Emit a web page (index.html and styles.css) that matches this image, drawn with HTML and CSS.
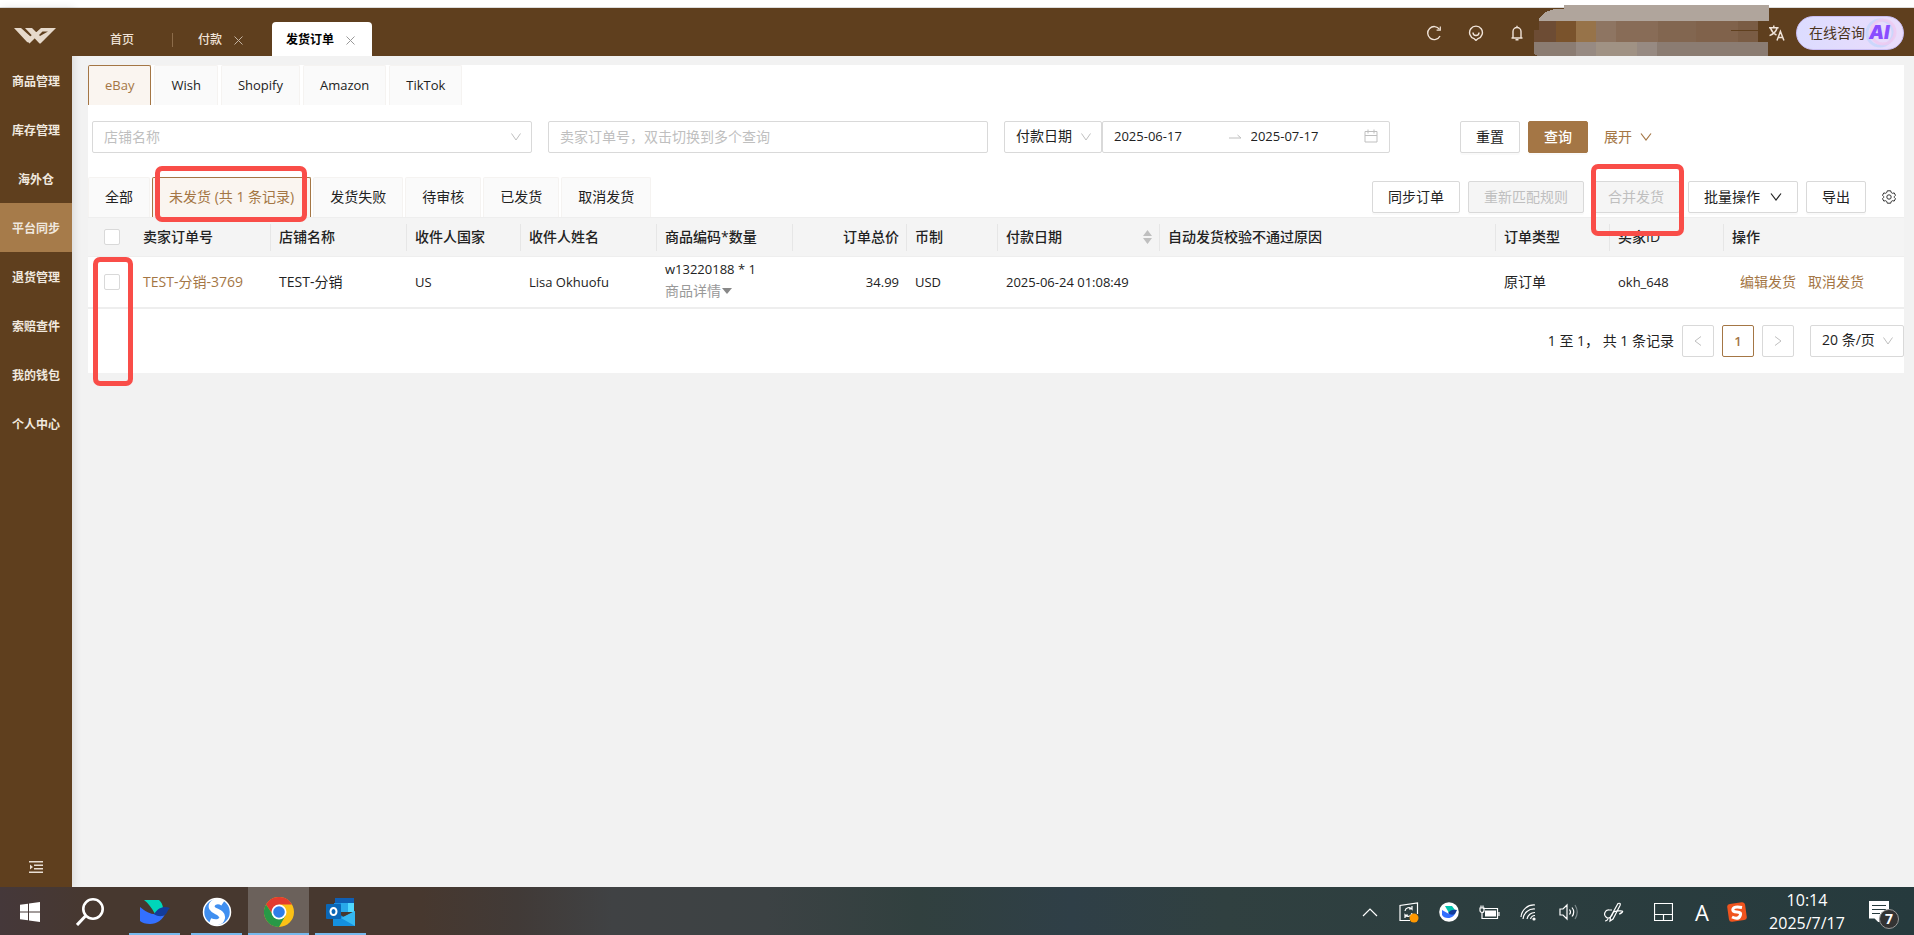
FILE: index.html
```html
<!DOCTYPE html>
<html lang="zh-CN">
<head>
<meta charset="utf-8">
<title>发货订单</title>
<link rel="stylesheet" href="styles.css">
</head>
<body>
<div class="edge"></div>
<div class="app">
  <aside class="sidebar">
    <a class="logo" href="#" aria-label="首页">
      <svg width="42" height="16" viewBox="0 0 42 16"><path d="M0 0h7l10 9-3.500 5.500zM11 0h7l8 8 8-4.500h-5.500L25 7l-3-2.500L27 0h15L26.500 15.500h-1zM15.500 15.500L12 12l6.500-5.500 3 3z" fill="#e6d9cb"/></svg>
    </a>
    <nav class="menu">
      <a href="#">商品管理</a>
      <a href="#">库存管理</a>
      <a href="#">海外仓</a>
      <a href="#" class="current">平台同步</a>
      <a href="#">退货管理</a>
      <a href="#">索赔查件</a>
      <a href="#">我的钱包</a>
      <a href="#">个人中心</a>
    </nav>
    <button class="fold" aria-label="展开菜单">
      <svg width="14" height="12" viewBox="0 0 14 12" fill="#e9dfd5"><path d="M0 0h14v1.500H0zM5 3.500h9V5H5zM5 7h9v1.500H5zM0 10.500h14V12H0zM1 3.500l3 2.500-3 2.500z"/></svg>
    </button>
  </aside>
  <div class="main">
    <header class="topbar">
      <nav class="pages">
        <a class="page home" href="#">首页</a>
        <a class="page pay" href="#">付款<svg width="9" height="9" viewBox="0 0 9 9"><path d="M.5.5l8 8M8.500.5l-8 8"/></svg></a>
        <a class="page open" href="#">发货订单<svg width="9" height="9" viewBox="0 0 9 9"><path d="M.5.5l8 8M8.500.5l-8 8"/></svg></a>
      </nav>
      <div class="tools">
        <button aria-label="刷新"><svg width="16" height="16" viewBox="0 0 16 16"><path d="M13.500 4.300A6.500 6.500 0 1 0 14 11"/><path d="M14.300 1.500v3.700h-3.700" stroke-width="1.200"/></svg></button>
        <button aria-label="客服"><svg width="16" height="16" viewBox="0 0 16 16"><path d="M8 15.400l-2-1.800A6.400 6.400 0 1 1 10 13.600z"/><path d="M5 7.500a3 3 0 0 0 6 0"/></svg></button>
        <button aria-label="通知"><svg width="14" height="16" viewBox="0 0 14 16"><path d="M1.500 13h11M3 13V6.500a4 4 0 0 1 8 0V13M7 .8v1.700M5.500 14.800h3"/></svg></button>
        <svg class="account" width="235" height="51" viewBox="0 0 235 51" shape-rendering="crispEdges">
          <path fill="#b0a59c" d="M30 0h205v16H5v-3l6-6 10-3h9z"/>
          <path fill="#6d4c34" d="M5 16h17v21H0V25h5z"/><path fill="#7a532c" d="M22 16h20v21H22z"/><path fill="#977349" d="M42 16h20v21H42z"/><path fill="#8e7562" d="M62 16h20v21H62z"/><path fill="#886c57" d="M82 16h42v21H82z"/><path fill="#826650" d="M124 16h38v21h-38z"/><path fill="#80624b" d="M162 16h42v21h-42z"/><path fill="#7a5c44" d="M204 16h20v21h-20z"/>
          <path fill="#8b7c72" d="M0 37h234v14H4l-4-2z"/><path fill="#a09284" d="M62 37h41v14H62z"/><path fill="#978a82" d="M42 37h20v14H42zM103 37h20v14h-20z"/><path fill="#5f3f1e" d="M197 25h27v1h-27z"/>
        </svg>
        <button class="lang" aria-label="语言"><svg width="16" height="16" viewBox="0 0 15 15"><path d="M0 2.500h9M4.500.500v2M1.500 3c1 3 3 5 5.500 6.500M7.500 3C6.500 6.500 4 8.500.5 10M7.500 14.500l3.200-8.500L14 14.500M8.700 11.700H13"/></svg></button>
        <button class="consult">在线咨询<span class="ai"><svg width="32" height="32" viewBox="0 0 32 32" fill="none"><circle cx="15" cy="16" r="13" stroke="#c4d6fb"/><circle cx="18" cy="15" r="12" stroke="#efc9f0"/></svg><b>AI</b></span></button>
      </div>
    </header>
    <main class="panel">
      <nav class="tabs shops">
        <button class="tab latin on">eBay</button><button class="tab latin">Wish</button><button class="tab latin">Shopify</button><button class="tab latin">Amazon</button><button class="tab latin">TikTok</button>
      </nav>
      <form class="filters">
        <div class="drop">
          <input type="text" class="field" placeholder="店铺名称" aria-label="店铺名称">
          <svg class="chev" width="12" height="12" viewBox="0 0 12 12"><path d="M1.500 2.500L6 9l4.500-6.500"/></svg>
        </div>
        <input type="text" class="field" placeholder="卖家订单号，双击切换到多个查询" aria-label="卖家订单号">
        <div class="period">
          <div class="drop kind">
            <select class="field" aria-label="日期类型"><option>付款日期</option></select>
            <svg class="chev" width="12" height="12" viewBox="0 0 12 12"><path d="M1.500 2.500L6 9l4.500-6.500"/></svg>
          </div>
          <div class="range field">
            <input class="latin" type="text" value="2025-06-17" aria-label="开始日期">
            <svg width="14" height="14" viewBox="0 0 14 14"><path d="M1 9h12L9.500 6"/></svg>
            <input class="latin" type="text" value="2025-07-17" aria-label="结束日期">
            <svg width="14" height="14" viewBox="0 0 14 14"><path d="M1 2.500h12v10.500H1zM1 6.500h12M4 .500v4M10 .500v4"/></svg>
          </div>
        </div>
        <div class="acts">
          <button type="button" class="btn">重置</button>
          <button type="button" class="btn solid">查询</button>
          <a class="more" href="#">展开<svg width="12" height="12" viewBox="0 0 12 12"><path d="M1 2.500L6 9l5-6.500"/></svg></a>
        </div>
      </form>
      <div class="bar">
        <nav class="tabs">
          <button class="tab">全部</button><button class="tab on marked">未发货 (<span>共 1 条记录</span>)<i class="mark mark-tab"></i></button><button class="tab">发货失败</button><button class="tab">待审核</button><button class="tab">已发货</button><button class="tab">取消发货</button>
        </nav>
        <div class="ops">
          <button class="btn">同步订单</button>
          <button class="btn" disabled>重新匹配规则</button>
          <span class="marked"><button class="btn" disabled>合并发货</button><i class="mark mark-merge"></i></span>
          <button class="btn">批量操作<svg width="12" height="12" viewBox="0 0 12 12"><path d="M1 2.500L6 9l5-6.500"/></svg></button>
          <button class="btn">导出</button>
          <button class="gear" aria-label="设置"><svg width="14" height="14" viewBox="0 0 14 14"><path d="M5.300.8h3.400l.5 1.700 1.300.8 1.700-.4 1.300 2.400-1.200 1.300v.8l1.200 1.300-1.300 2.400-1.700-.4-1.300.8-.5 1.700H5.300l-.5-1.700-1.300-.8-1.700.4L.5 8.700l1.200-1.300v-.8L.5 5.300l1.300-2.400 1.700.4 1.300-.8z"/><circle cx="7" cy="7" r="2.200"/></svg></button>
        </div>
      </div>
      <div class="grid">
        <table>
          <colgroup><col class="w47"><col class="w136"><col class="w136"><col class="w114"><col class="w136"><col class="w136"><col class="w114"><col class="w91"><col class="w162"><col><col class="w114"><col class="w114"><col class="w180"></colgroup>
          <thead><tr>
            <th class="pick"><input type="checkbox" aria-label="全选"></th><th>卖家订单号</th><th>店铺名称</th><th>收件人国家</th><th>收件人姓名</th><th>商品编码*数量</th><th class="num">订单总价</th><th>币制</th><th><span class="sort">付款日期<svg width="9" height="14" viewBox="0 0 9 14"><path d="M4.500 0L9 6H0zM4.500 14L9 8H0z"/></svg></span></th><th>自动发货校验不通过原因</th><th>订单类型</th><th>买家ID</th><th>操作</th>
          </tr></thead>
          <tbody><tr>
            <td class="pick"><input type="checkbox" aria-label="选择订单"></td><td><a href="#">TEST-分销-3769</a></td><td>TEST-分销</td><td class="latin">US</td><td class="latin">Lisa Okhuofu</td><td class="goods"><div class="latin">w13220188 * 1</div><a class="detail" href="#">商品详情<svg width="10" height="6" viewBox="0 0 10 6"><path d="M0 0h10L5 6z"/></svg></a></td><td class="num latin">34.99</td><td class="latin">USD</td><td class="latin">2025-06-24 01:08:49</td><td></td><td>原订单</td><td class="latin">okh_648</td><td class="links"><a href="#">编辑发货</a><a href="#">取消发货</a></td>
          </tr></tbody>
        </table>
        <i class="mark mark-rows"></i>
      </div>
      <footer class="pager">
        <span>1 至 1， 共 1 条记录</span>
        <button aria-label="上一页"><svg width="12" height="12" viewBox="0 0 12 12"><path d="M9 1.500L3 6l6 4.500"/></svg></button>
        <button class="now latin">1</button>
        <button aria-label="下一页"><svg width="12" height="12" viewBox="0 0 12 12"><path d="M3 1.500L9 6l-6 4.500"/></svg></button>
        <div class="drop size">
          <select class="field" aria-label="每页条数"><option>20 条/页</option></select>
          <svg class="chev" width="12" height="12" viewBox="0 0 12 12"><path d="M1.500 2.500L6 9l4.500-6.500"/></svg>
        </div>
      </footer>
    </main>
  </div>
</div>
<div class="taskbar">
  <div class="launch">
    <button class="start" aria-label="开始"><svg width="20" height="20" viewBox="0 0 20 20" fill="#fff"><path d="M0 2.800l8-1.100v7.800H0zM9 1.500L20 0v9.500H9zM0 10.500h8v7.800l-8-1.100zM9 10.500h11V20L9 18.500z"/></svg></button>
    <button class="find" aria-label="搜索"><svg width="28" height="28" viewBox="0 0 28 28" fill="none" stroke="#fff" stroke-width="2.600"><circle cx="17" cy="11" r="9.700"/><path d="M9.500 18L1 27" stroke-width="3"/></svg></button>
    <button class="task" aria-label="飞连"><svg width="30" height="26" viewBox="0 0 30 26"><path fill="#00d6b9" d="M4 1h15c2.500 2.500 3.500 4.500 4 7.500L15 15C12 9 8 4 4 1z"/><path fill="#3370ff" d="M0 8c6 5 12 8 17 7 2 0 6-1 9-2-3 8-9 12-16 12-4 0-8-1-10-3z"/><path fill="#133c9a" d="M14 15c5-7 10-8 16-6-2 1-3 5-4 6-3 3-8 3-12 0z"/></svg></button>
    <button class="task" aria-label="搜狗"><svg width="30" height="30" viewBox="0 0 30 30"><circle cx="15" cy="15" r="13.500" fill="#408ff0" stroke="#fff" stroke-width="1.500"/><path d="M21 6C15 2 8 6 10 11c2 4 11 4 10 10-1 5-7 5-12 3" fill="none" stroke="#fff" stroke-width="6"/></svg></button>
    <button class="task live" aria-label="Chrome"><svg width="30" height="30" viewBox="0 0 30 30"><circle cx="15" cy="15" r="15" fill="#fbc116"/><path fill="#e33b2e" d="M2 7.500A15 15 0 0 1 28 7.500H15L9 18z"/><path fill="#279847" d="M2 7.500A15 15 0 0 0 15 30l6.500-11.500L15 15 9 18z"/><circle cx="15" cy="15" r="7.500" fill="#fff"/><circle cx="15" cy="15" r="5.800" fill="#2f7de9"/></svg></button>
    <button class="task" aria-label="Outlook"><svg width="30" height="28" viewBox="0 0 30 28"><path fill="#0f5fb4" d="M9 0h19v8H9z"/><path fill="#1a8ee0" d="M8 5h7v9H8z"/><path fill="#28a8ea" d="M15 5h7v9h-7z"/><path fill="#50d9ff" d="M22 5h6v9h-6z"/><path fill="#1490df" d="M7 13l11 6 11-6v15H7z"/><path fill="#35b8f1" d="M29 13v15L15 20z"/><rect y="6" width="15" height="15" rx="1" fill="#0a67b7"/><ellipse cx="7.500" cy="13.500" rx="3" ry="3.500" fill="none" stroke="#fff" stroke-width="2"/></svg></button>
  </div>
  <div class="tray">
    <svg class="t1" width="16" height="10" viewBox="0 0 16 10"><path d="M1 9l7-7 7 7"/></svg>
    <svg class="t2" width="20" height="21" viewBox="0 0 20 21"><path d="M11 18.500H1V3.500L18.500 1v11M6 9a4 4 0 0 1 7-2V4M13 7h-3M13 11a4 4 0 0 1-7 2v3M6 13h3"/><circle cx="15" cy="16" r="4.500" fill="#ff9800" stroke="none"/></svg>
    <svg class="t3" width="20" height="20" viewBox="0 0 20 20"><circle cx="10" cy="10" r="9.800" fill="#fff" stroke="none"/><path stroke="none" fill="#00c4ae" d="M6 4h7l3 4-6 3z"/><path stroke="none" fill="#3370ff" d="M3 8l7 4 7-4c-1 6-4 8-8 8-3 0-5-1-6-3z"/><path stroke="none" fill="#133c9a" d="M9 11c2-3 5-4 9-3l-2 4c-2 1-5 1-7-1z"/></svg>
    <svg class="t4" width="21" height="16" viewBox="0 0 21 16"><path d="M4 4.500h14.500v10H3V8M1 4h4v2.500a2 2 0 0 1-4 0zM2 1.500V4M4 1.500V4M20 8v4"/><path fill="#fff" stroke="none" d="M6 6.500h11v6H6z"/></svg>
    <svg class="t5" width="18" height="18" viewBox="0 0 18 18"><path d="M1 14A13 13 0 0 1 15 2M3 16A11 11 0 0 1 15 6M7 16A8 8 0 0 1 15 9.500M10.500 16a5 5 0 0 1 4.500-3.500"/><circle cx="14" cy="16" r="1" fill="#fff"/></svg>
    <svg class="t6" width="20" height="18" viewBox="0 0 20 18"><path d="M1 6h3l4-4v14l-4-4H1zM10.500 6.500q2 2.500 0 5M13 4.500q3.500 4.500 0 9"/><path stroke="#7b888a" d="M16 2q4.500 7 0 14"/></svg>
    <svg class="t7" width="20" height="21" viewBox="0 0 20 21"><path d="M14 1.500q3-1 2 2L9 17l-3 2 .5-4zM8 8H5a4 4 0 0 0-3 7c3 3 6-1 7-4s7-2 9-2-1 3-3 3M1 19q2 0 3-2"/></svg>
    <svg class="t8" width="19" height="18" viewBox="0 0 19 18"><path d="M.5.500h18v17H.5zM.5 11.500h18M9.500 11.500v6"/></svg>
    <span class="ime">A</span>
    <svg class="t9" width="20" height="20" viewBox="0 0 20 20"><rect x="1" y="1" width="18" height="18" rx="3" fill="#f0541e" stroke="none" transform="rotate(-8 10 10)"/><path d="M15 5.500Q7 4 6 7t4 3 3 4-8 1" stroke-width="3"/></svg>
    <div class="clock"><span>10:14</span><span>2025/7/17</span></div>
    <button class="notice" aria-label="通知"><svg width="20" height="21" viewBox="0 0 20 21"><path fill="#fff" d="M0 0h20v17H10v4l-4-4H0z"/><path stroke="#263a3d" d="M3 4.500h14M3 8.500h14M3 12.500h8"/></svg><b class="count">7</b></button>
  </div>
</div>
</body>
</html>
```
FILE: styles.css
```css
* { box-sizing: border-box; }
body {
  margin: 0;
  min-height: 100vh;
  display: flex;
  flex-direction: column;
  background: #f2f2f2;
  color: #222;
  font: 14px/22px "Open Sans", "Noto Sans CJK SC", sans-serif;
}
button, input, select { font: inherit; color: inherit; margin: 0; }
button { border: 0; background: none; padding: 0; white-space: nowrap; }
a { color: #a47645; text-decoration: none; }
svg { display: block; flex: none; }
.latin { font-size: 13px; }

.edge { height: 8px; background: #fff; border-bottom: 1px solid #dcdcdc; }
.app { flex: 1; display: flex; }
.sidebar {
  width: 72px;
  display: flex;
  flex-direction: column;
  background: #5f3f1e;
  box-shadow: 2px 0 8px rgba(0, 0, 0, .1);
}
.logo { height: 48px; padding: 20px 14px 0; }
.menu a {
  display: block;
  height: 49px;
  line-height: 52px;
  text-align: center;
  color: #f0e8df;
  font-size: 12px;
  font-weight: 700;
}
.menu .current { background: #a67b4a; }
.fold { margin-top: auto; height: 40px; padding-left: 29px; }

.main { flex: 1; min-width: 0; display: flex; flex-direction: column; }
.topbar {
  height: 48px;
  display: flex;
  justify-content: space-between;
  align-items: flex-end;
  background: #5f3f1e;
}
.pages { display: flex; font-size: 12px; font-weight: 500; }
.page {
  height: 34px;
  display: flex;
  align-items: center;
  gap: 12px;
  padding-top: 2px;
  color: #f0e3d8;
}
.page svg { fill: none; stroke: #c4b3a1; }
.home { padding-left: 38px; width: 101px; }
.home::after { content: ""; margin-left: auto; width: 1px; height: 14px; background: #8c6c4a; }
.pay { width: 99px; padding-left: 25px; }
.open {
  width: 100px;
  padding-left: 14px;
  border-radius: 4px 4px 0 0;
  background: #fff;
  color: #000;
  font-weight: 700;
}
.open svg { stroke: #999; }
.tools { display: flex; align-items: center; height: 52px; padding-right: 10px; }
.tools button:not(.consult) { width: 16px; margin: 6px 26px 0 0; }
.tools svg { fill: none; stroke: #f0e3d8; stroke-width: 1.4; }
.tools .account { stroke: none; margin-left: -18px; }
.tools .lang:not(.consult) { margin: 6px 11px 0 0; }
.consult {
  display: flex;
  align-items: center;
  width: 108px;
  height: 34px;
  padding-left: 12px;
  margin-top: 6px;
  border-radius: 17px;
  background: linear-gradient(90deg, #dcdcff, #eadcfb);
  border: 1px solid #c9bdf2;
  color: #4a3420;
}
.ai { position: relative; flex: none; }
.ai svg { stroke-width: 3; }
.ai svg circle { stroke-opacity: .8; }
.ai b {
  position: absolute;
  left: 4px;
  top: 5px;
  font: italic 900 19px/22px "Inter", sans-serif;
  color: #8a4dff;
}

.panel { margin: 9px 10px 0 16px; background: #fff; padding-bottom: 16px; }
.tabs { display: flex; gap: 2px; }
.shops { gap: 3px; }
.tab {
  height: 40px;
  padding: 0 16px 2px;
  background: #fafafa;
  border: 1px solid #f5f3f1;
  border-bottom: 0;
  border-radius: 2px 2px 0 0;
}
.tab.on { background: #faf5f0; border-color: #a47645; color: #a47645; }
.filters {
  display: grid;
  grid-template-columns: repeat(4, minmax(0, 1fr));
  gap: 16px;
  padding: 16px 4px 24px;
}
.field {
  width: 100%;
  height: 32px;
  padding: 0 11px 2px;
  border: 1px solid #d9d9d9;
  border-radius: 2px;
  background: #fff;
  appearance: none;
  outline: 0;
}
.field::placeholder { color: #bfbfbf; }
.drop { position: relative; }
.chev { position: absolute; right: 10px; top: 10px; fill: none; stroke: #bfbfbf; pointer-events: none; }
.period { display: flex; margin-right: 54px; }
.kind { flex: none; width: 98px; }
.range { display: flex; align-items: center; flex: 1; min-width: 0; }
.range input { flex: 1; min-width: 0; border: 0; padding: 0; background: none; outline: 0; }
.range svg { fill: none; stroke: #bfbfbf; margin-right: 9px; }
.range svg:last-child { margin: 0; }
.acts { display: flex; gap: 8px; }
.btn {
  display: flex;
  align-items: center;
  gap: 8px;
  height: 32px;
  padding: 0 15px 1px;
  border: 1px solid #d9d9d9;
  border-radius: 2px;
  background: #fff;
  box-shadow: 0 2px 0 rgba(0, 0, 0, .02);
}
.btn svg, .more svg { fill: none; stroke: currentColor; stroke-width: 1.2; }
.btn svg { margin-left: 2px; }
.btn:disabled { background: #f5f5f5; color: #bfbfbf; }
.solid { background: #a47645; border-color: #a47645; color: #fff; font-weight: 500; }
.more { display: flex; align-items: center; gap: 8px; margin-left: 8px; }

.bar { display: flex; justify-content: space-between; }
.ops { display: flex; align-items: center; gap: 8px; }
.gear { width: 30px; padding-left: 8px; }
.gear svg { fill: none; stroke: #333; }
.marked { position: relative; }
.mark {
  position: absolute;
  z-index: 2;
  border: 5px solid #f94d48;
  border-radius: 7px;
  pointer-events: none;
}
.mark-tab { left: 2px; right: 3px; top: -12px; bottom: -5px; }
.mark-merge { left: -1px; right: -4px; top: -17px; bottom: -23px; }
.mark-rows { left: 5px; top: 40px; width: 40px; height: 129px; }

.grid { position: relative; }
table { width: 100%; table-layout: fixed; border-collapse: separate; border-spacing: 0; }
.w47 { width: 47px; }
.w91 { width: 91px; }
.w114 { width: 114px; }
.w136 { width: 136px; }
.w162 { width: 162px; }
.w180 { width: 180px; }
th, td { padding: 0 8px; text-align: left; white-space: nowrap; }
th {
  height: 40px;
  font-weight: 500;
  background: linear-gradient(#e6e6e6, #e6e6e6) right center / 1px 27px no-repeat #f4f4f4;
  border-top: 1px solid #eee;
  border-bottom: 1px solid #eee;
}
th:first-child, th:last-child { background: #f4f4f4; }
td { height: 52px; border-bottom: 2px solid #eee; }
td.goods { padding-bottom: 4px; }
.num { text-align: right; }
th.pick, td.pick { padding-left: 16px; }
.pick input {
  display: block;
  appearance: none;
  width: 16px;
  height: 16px;
  border: 1px solid #d9d9d9;
  border-radius: 2px;
  background: #fff;
}
.sort { display: flex; justify-content: space-between; align-items: center; }
.sort svg { fill: #bfbfbf; }
.detail { display: flex; align-items: center; gap: 1px; color: #999; }
.detail svg { fill: #888; }
.links a { margin-left: 8px; }
.links a + a { margin-left: 12px; }
.pager { display: flex; justify-content: flex-end; align-items: center; gap: 8px; padding-top: 16px; }
.pager button {
  display: grid;
  place-items: center;
  width: 32px;
  height: 32px;
  border: 1px solid #d9d9d9;
  border-radius: 2px;
}
.pager button svg { fill: none; stroke: #bfbfbf; }
.pager .now { border-color: #a47645; color: #a47645; font-weight: 600; }
.size { width: 94px; margin-left: 8px; }

.taskbar {
  height: 48px;
  display: flex;
  justify-content: space-between;
  background: linear-gradient(90deg, #45383a, #47382f 5%, #47382f 22%, #413a37 27%, #404244 32%, #3c4244 40%, #31403f 48%, #2f3f47 56%, #304040 64%, #263a3d);
  color: #fff;
}
.launch { display: flex; }
.launch button { display: grid; place-items: center; padding-top: 2px; }
.start { width: 60px; }
.find { width: 60px; }
.launch .task { width: 51px; margin-left: 11px; padding-top: 4px; border-bottom: 2px solid #76b9ed; }
.launch .find + .task { margin-left: 9px; }
.launch .live { width: 61px; margin-left: 6px; background: #6b615b; }
.launch .live + .task { margin-left: 6px; }
.tray { display: flex; align-items: center; padding-top: 2px; }
.tray > svg, .notice svg { fill: none; stroke: #fff; stroke-width: 1.2; }
.t2, .t3, .t4 { margin-right: 20px; }
.t1, .t5 { margin-right: 21px; }
.t6 { margin-right: 25px; }
.t7 { margin-right: 30px; }
.t8 { margin-right: 22px; }
.ime { font-size: 22px; width: 32px; }
.clock { display: flex; flex-direction: column; align-items: center; width: 76px; margin-left: 22px; font-size: 16px; line-height: 23px; }
.notice { position: relative; padding: 0 25px 2px 24px; }
.count {
  position: absolute;
  left: 34px;
  top: 8px;
  width: 20px;
  height: 20px;
  border: 1px solid #999;
  border-radius: 50%;
  background: #333;
  font-size: 14px;
  line-height: 18px;
}
```
